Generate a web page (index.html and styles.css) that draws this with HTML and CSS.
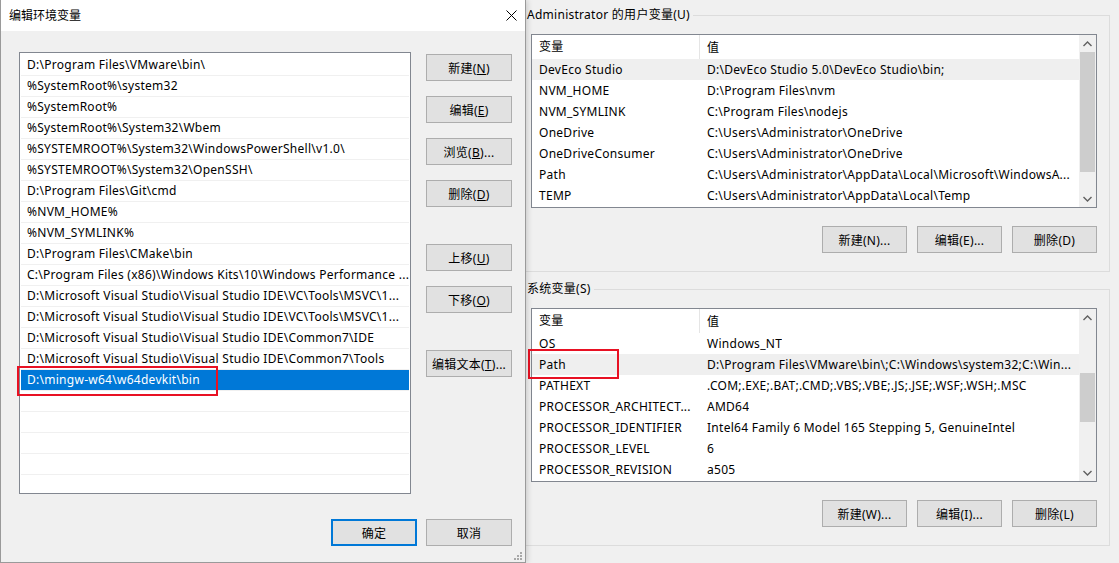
FILE: index.html
```html
<!DOCTYPE html>
<html lang="zh-CN">

<head>
    <meta charset="UTF-8">
    <title>编辑环境变量</title>
    <link rel="stylesheet" href="styles.css">
</head>

<body>

    <div class="desktop">

        <!-- Edit dialog start -->
        <div class="dialog">
            <div class="titlebar">
                <span class="title">编辑环境变量</span>
                <svg class="close" width="11" height="11" viewBox="0 0 11 11">
                    <path d="M0.5 0.5 L10.5 10.5 M10.5 0.5 L0.5 10.5" stroke="#000" stroke-width="1" fill="none" />
                </svg>
            </div>

            <div class="dialog-body">
                <div class="list-wrap">
                    <div class="path-list">
                        <div class="path-row">D:\Program Files\VMware\bin\</div>
                        <div class="path-row">%SystemRoot%\system32</div>
                        <div class="path-row">%SystemRoot%</div>
                        <div class="path-row">%SystemRoot%\System32\Wbem</div>
                        <div class="path-row">%SYSTEMROOT%\System32\WindowsPowerShell\v1.0\</div>
                        <div class="path-row">%SYSTEMROOT%\System32\OpenSSH\</div>
                        <div class="path-row">D:\Program Files\Git\cmd</div>
                        <div class="path-row">%NVM_HOME%</div>
                        <div class="path-row">%NVM_SYMLINK%</div>
                        <div class="path-row">D:\Program Files\CMake\bin</div>
                        <div class="path-row">C:\Program Files (x86)\Windows Kits\10\Windows Performance ...</div>
                        <div class="path-row">D:\Microsoft Visual Studio\Visual Studio IDE\VC\Tools\MSVC\1...</div>
                        <div class="path-row">D:\Microsoft Visual Studio\Visual Studio IDE\VC\Tools\MSVC\1...</div>
                        <div class="path-row">D:\Microsoft Visual Studio\Visual Studio IDE\Common7\IDE</div>
                        <div class="path-row">D:\Microsoft Visual Studio\Visual Studio IDE\Common7\Tools</div>
                        <div class="path-row selected">D:\mingw-w64\w64devkit\bin</div>
                        <div class="path-row"></div>
                        <div class="path-row"></div>
                        <div class="path-row"></div>
                        <div class="path-row"></div>
                        <div class="path-row"></div>
                    </div>
                    <div class="mark mark-left"></div>
                </div>

                <div class="side-buttons">
                    <button class="btn">新建(<u>N</u>)</button>
                    <button class="btn">编辑(<u>E</u>)</button>
                    <button class="btn">浏览(<u>B</u>)...</button>
                    <button class="btn">删除(<u>D</u>)</button>
                    <button class="btn spaced">上移(<u>U</u>)</button>
                    <button class="btn">下移(<u>O</u>)</button>
                    <button class="btn spaced">编辑文本(<u>T</u>)...</button>
                </div>
            </div>

            <div class="dialog-footer">
                <button class="btn btn-default">确定</button>
                <button class="btn">取消</button>
            </div>

            <svg class="grip" width="8" height="8" viewBox="0 0 8 8">
                <rect x="6" y="0" width="2" height="2" />
                <rect x="3" y="3" width="2" height="2" />
                <rect x="6" y="3" width="2" height="2" />
                <rect x="0" y="6" width="2" height="2" />
                <rect x="3" y="6" width="2" height="2" />
                <rect x="6" y="6" width="2" height="2" />
            </svg>
        </div>
        <!-- Edit dialog end -->

        <!-- Environment variables window start -->
        <div class="env-window">

            <div class="group">
                <div class="group-head">
                    <span class="group-label">Administrator 的用户变量(U)</span>
                    <span class="group-rule"></span>
                </div>
                <div class="group-box">
                    <div class="var-list">
                        <div class="var-cols">
                            <div class="var-head"><span class="col-name">变量</span><span class="col-value">值</span></div>
                            <div class="var-row selected"><span class="col-name">DevEco Studio</span><span class="col-value">D:\DevEco Studio 5.0\DevEco Studio\bin;</span></div>
                            <div class="var-row"><span class="col-name">NVM_HOME</span><span class="col-value">D:\Program Files\nvm</span></div>
                            <div class="var-row"><span class="col-name">NVM_SYMLINK</span><span class="col-value">C:\Program Files\nodejs</span></div>
                            <div class="var-row"><span class="col-name">OneDrive</span><span class="col-value">C:\Users\Administrator\OneDrive</span></div>
                            <div class="var-row"><span class="col-name">OneDriveConsumer</span><span class="col-value">C:\Users\Administrator\OneDrive</span></div>
                            <div class="var-row"><span class="col-name">Path</span><span class="col-value">C:\Users\Administrator\AppData\Local\Microsoft\WindowsA...</span></div>
                            <div class="var-row"><span class="col-name">TEMP</span><span class="col-value">C:\Users\Administrator\AppData\Local\Temp</span></div>
                        </div>
                        <div class="scrollbar">
                            <span class="sb-arrow"><svg width="9" height="6" viewBox="0 0 9 6"><path d="M0.5 5 L4.5 1 L8.5 5" /></svg></span>
                            <span class="sb-track"><span class="sb-thumb" style="margin-top: 0; height: 120px;"></span></span>
                            <span class="sb-arrow"><svg width="9" height="6" viewBox="0 0 9 6"><path d="M0.5 1 L4.5 5 L8.5 1" /></svg></span>
                        </div>
                    </div>
                    <div class="group-buttons">
                        <button class="btn btn-wide">新建(N)...</button>
                        <button class="btn btn-wide">编辑(E)...</button>
                        <button class="btn btn-wide">删除(D)</button>
                    </div>
                </div>
            </div>

            <div class="group">
                <div class="group-head">
                    <span class="group-label">系统变量(S)</span>
                    <span class="group-rule"></span>
                </div>
                <div class="group-box">
                    <div class="var-list">
                        <div class="var-cols">
                            <div class="var-head"><span class="col-name">变量</span><span class="col-value">值</span></div>
                            <div class="var-row"><span class="col-name">OS</span><span class="col-value">Windows_NT</span></div>
                            <div class="var-row selected"><span class="col-name">Path</span><span class="col-value">D:\Program Files\VMware\bin\;C:\Windows\system32;C:\Win...</span></div>
                            <div class="var-row"><span class="col-name">PATHEXT</span><span class="col-value">.COM;.EXE;.BAT;.CMD;.VBS;.VBE;.JS;.JSE;.WSF;.WSH;.MSC</span></div>
                            <div class="var-row"><span class="col-name">PROCESSOR_ARCHITECT...</span><span class="col-value">AMD64</span></div>
                            <div class="var-row"><span class="col-name">PROCESSOR_IDENTIFIER</span><span class="col-value">Intel64 Family 6 Model 165 Stepping 5, GenuineIntel</span></div>
                            <div class="var-row"><span class="col-name">PROCESSOR_LEVEL</span><span class="col-value">6</span></div>
                            <div class="var-row"><span class="col-name">PROCESSOR_REVISION</span><span class="col-value">a505</span></div>
                        </div>
                        <div class="scrollbar">
                            <span class="sb-arrow"><svg width="9" height="6" viewBox="0 0 9 6"><path d="M0.5 5 L4.5 1 L8.5 5" /></svg></span>
                            <span class="sb-track"><span class="sb-thumb" style="margin-top: 47px; height: 49px;"></span></span>
                            <span class="sb-arrow"><svg width="9" height="6" viewBox="0 0 9 6"><path d="M0.5 1 L4.5 5 L8.5 1" /></svg></span>
                        </div>
                    </div>
                    <div class="group-buttons">
                        <button class="btn btn-wide">新建(W)...</button>
                        <button class="btn btn-wide">编辑(I)...</button>
                        <button class="btn btn-wide">删除(L)</button>
                    </div>
                </div>
                <div class="mark mark-right"></div>
            </div>

        </div>
        <!-- Environment variables window end -->

    </div>

</body>

</html>
```

FILE: styles.css
```css
:root {
    --face: #f0f0f0;
    --button: #e1e1e1;
    --button-border: #adadad;
    --list-border: #828790;
    --row-line: #f0f0f0;
    --select: #0078d7;
    --select-soft: #efefef;
    --group-line: #dcdcdc;
    --mark: #e81123;
}

* {
    box-sizing: border-box;
}

body {
    margin: 0;
    font-family: "Noto Sans", "Noto Sans CJK SC", sans-serif;
    font-size: 12px;
    letter-spacing: 0.27px;
    color: #000;
    background: var(--face);
    overflow: hidden;
}

.desktop {
    display: flex;
    width: 1119px;
    height: 563px;
}

/* ---------- edit dialog ---------- */

.dialog {
    position: relative;
    z-index: 1;
    flex: none;
    width: 526px;
    height: 563px;
    display: flex;
    flex-direction: column;
    background: var(--face);
    border-left: 1px solid #9a9a9a;
    border-right: 1px solid #9a9a9a;
    border-bottom: 1px solid #9a9a9a;
    box-shadow: 1px 0 6px rgba(0, 0, 0, 0.18);
}

.titlebar {
    height: 31px;
    display: flex;
    align-items: center;
    padding: 0 8px 0 8px;
    background: #fff;
}

.title {
    line-height: 16px;
    letter-spacing: 0;
}

.close {
    margin-left: auto;
}

.dialog-body {
    display: flex;
    padding: 21px 13px 0 18px;
}

.list-wrap {
    position: relative;
    width: 392px;
    height: 442px;
}

.path-list {
    height: 100%;
    padding: 2px 1px 1px;
    overflow: hidden;
    background: #fff;
    border: 1px solid var(--list-border);
}

.path-row {
    height: 21px;
    line-height: 20px;
    padding-left: 6px;
    border-bottom: 1px solid var(--row-line);
    white-space: nowrap;
    overflow: hidden;
}

.path-row.selected {
    background: var(--select);
    color: #fff;
}

.side-buttons {
    display: flex;
    flex-direction: column;
    gap: 15px;
    margin-left: 15px;
    padding-top: 2px;
}

.side-buttons .spaced {
    margin-top: 22px;
}

.btn {
    width: 86px;
    height: 27px;
    padding: 0;
    font: inherit;
    letter-spacing: inherit;
    color: #000;
    background: var(--button);
    border: 1px solid var(--button-border);
    white-space: nowrap;
}

.btn u {
    text-underline-offset: 1px;
}

.btn-default {
    border: 2px solid var(--select);
}

.btn-wide {
    width: 85px;
}

.dialog-footer {
    display: flex;
    justify-content: flex-end;
    gap: 9px;
    padding: 25px 13px 0 0;
}

.grip {
    position: absolute;
    right: 3px;
    bottom: 2px;
    fill: #a8a8a8;
}

.mark {
    position: absolute;
    border: 2px solid var(--mark);
}

.mark-left {
    left: -2px;
    top: 314px;
    width: 201px;
    height: 30px;
}

/* ---------- environment variables window ---------- */

.env-window {
    flex: 1;
    padding-top: 7px;
}

.group {
    position: relative;
    width: 584px;
    margin-bottom: 9px;
}

.group-head {
    display: flex;
    height: 16px;
}

.group-label {
    line-height: 16px;
    padding: 0 3px 0 1px;
    white-space: nowrap;
}

.group-rule {
    flex: 1;
    margin-top: 8px;
    border-top: 1px solid var(--group-line);
    border-right: 1px solid var(--group-line);
}

.group-box {
    padding: 11px 12px 18px 5px;
    border-right: 1px solid var(--group-line);
    border-bottom: 1px solid var(--group-line);
}

.var-list {
    display: flex;
    height: 174px;
    background: #fff;
    border: 1px solid var(--list-border);
}

.var-cols {
    flex: 1;
    overflow: hidden;
}

.var-head {
    display: flex;
    height: 24px;
    align-items: center;
}

.var-row {
    display: flex;
    height: 21px;
    align-items: center;
}

.var-row.selected {
    background: var(--select-soft);
}

.col-name {
    flex: none;
    width: 168px;
    padding-left: 7px;
    white-space: nowrap;
    overflow: hidden;
}

.var-head .col-name {
    line-height: 24px;
    border-right: 1px solid #e5e5e5;
}

.col-value {
    padding-left: 7px;
    white-space: nowrap;
    overflow: hidden;
}

.scrollbar {
    flex: none;
    width: 17px;
    display: flex;
    flex-direction: column;
    background: var(--face);
}

.sb-arrow {
    height: 17px;
    display: flex;
    align-items: center;
    justify-content: center;
}

.sb-arrow svg {
    fill: none;
    stroke: #606060;
    stroke-width: 1.4;
}

.sb-track {
    flex: 1;
}

.sb-thumb {
    display: block;
    margin: 0 1px;
    background: #cdcdcd;
}

.group-buttons {
    display: flex;
    justify-content: flex-end;
    gap: 10px;
    margin-top: 18px;
}

.mark-right {
    left: 2px;
    top: 68px;
    width: 91px;
    height: 30px;
}
```
